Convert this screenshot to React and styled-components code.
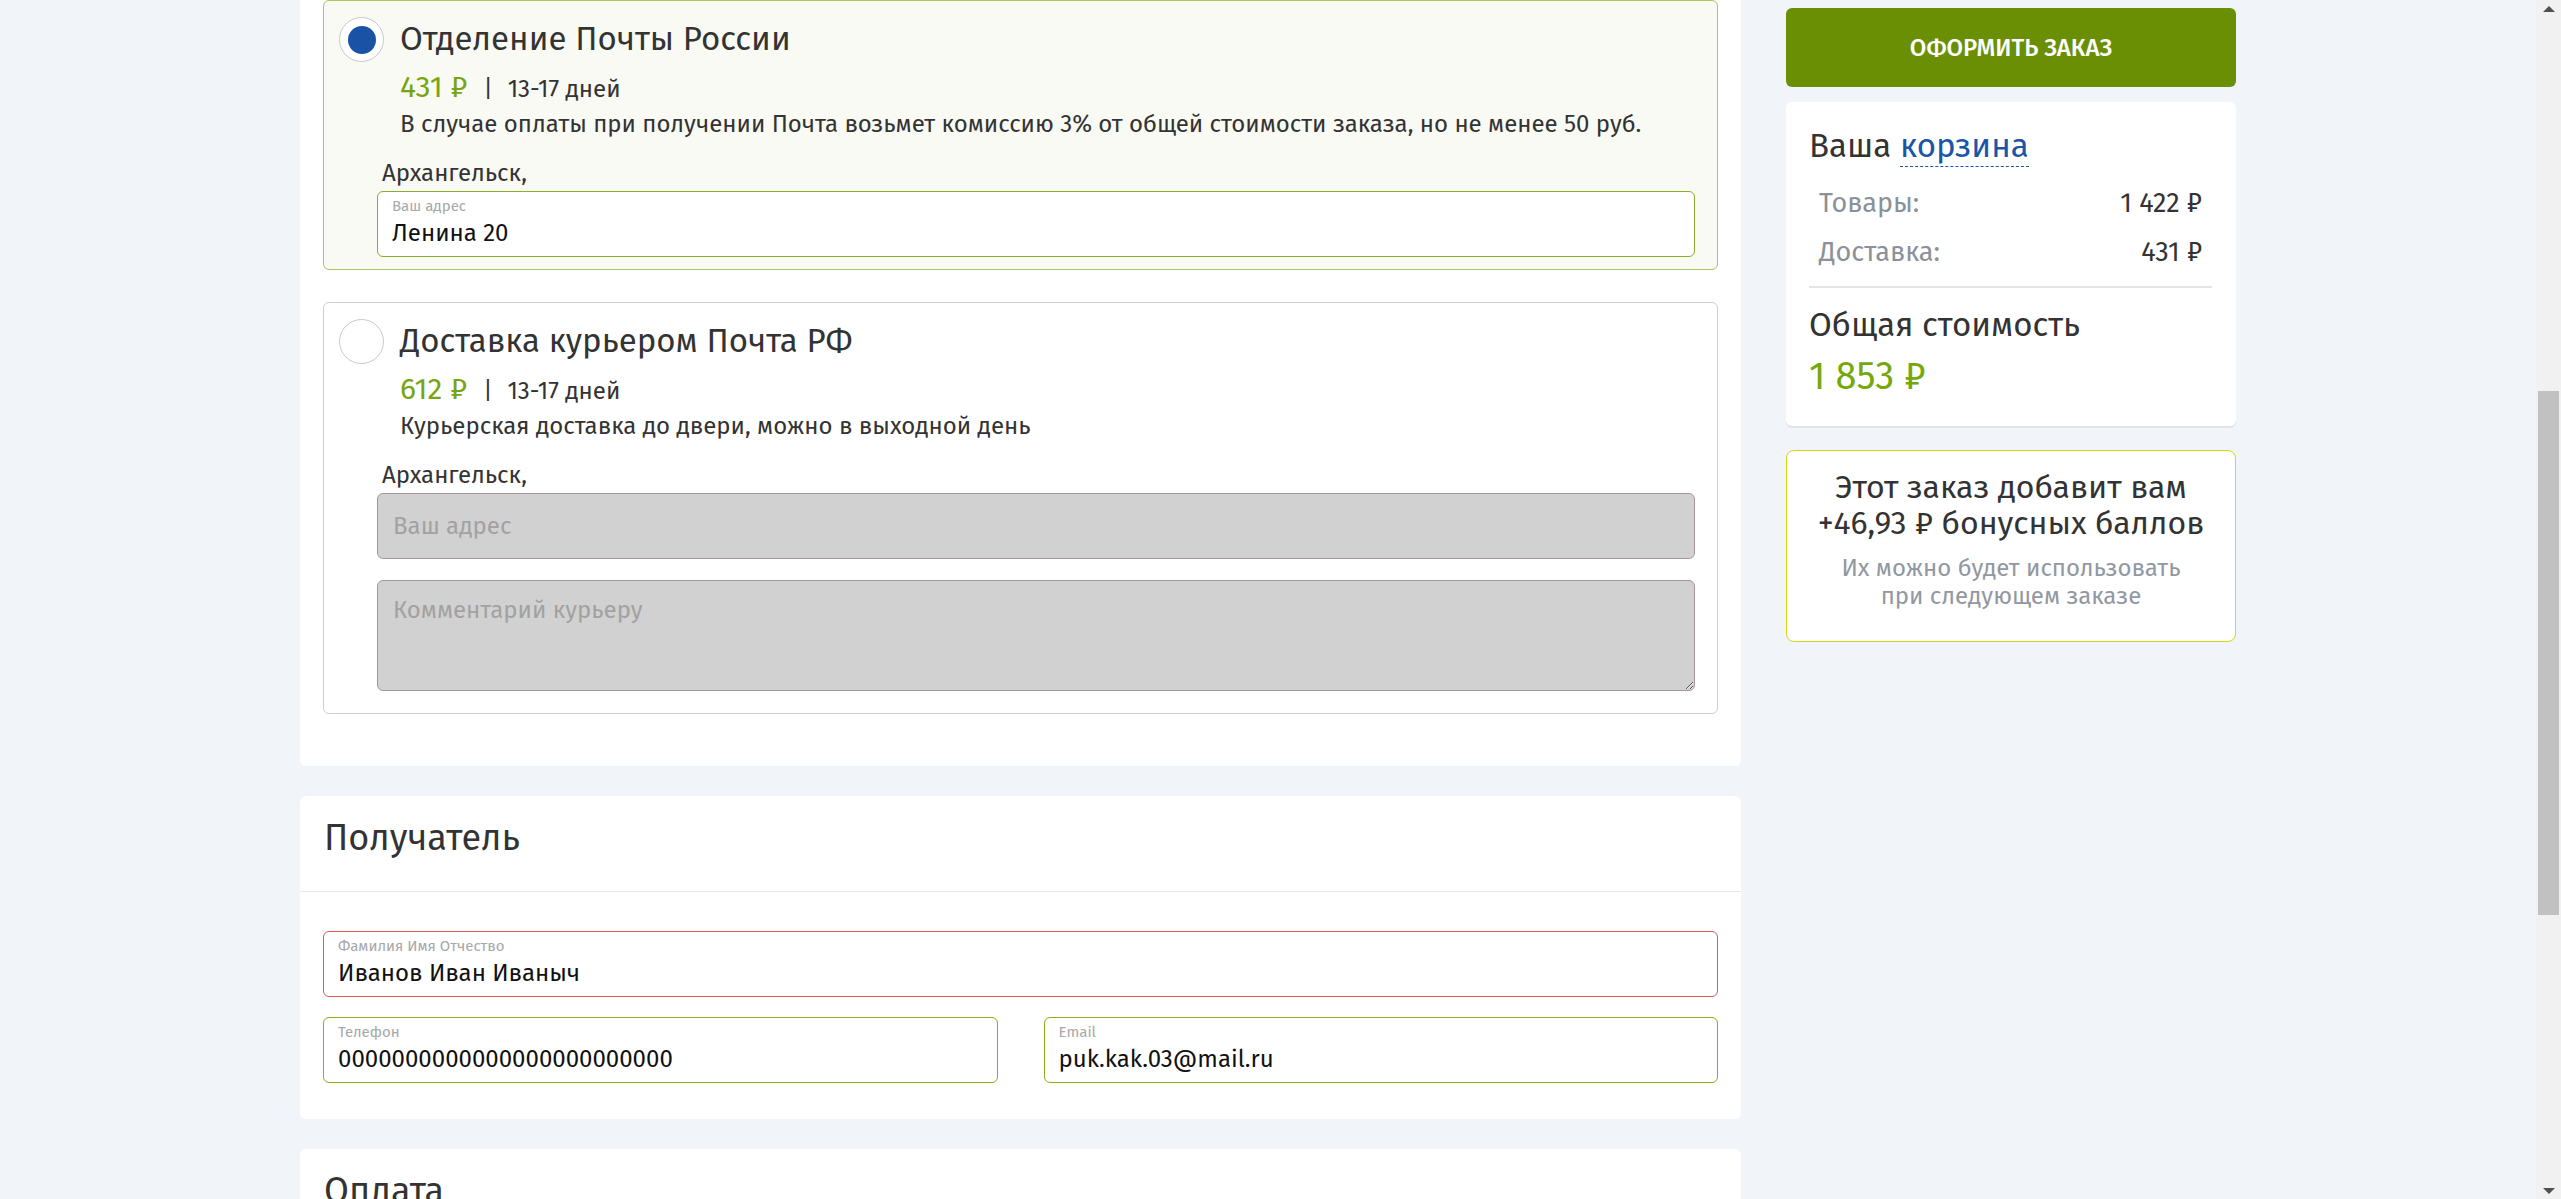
import React from "react";
import styled, { createGlobalStyle } from "styled-components";

const Global = createGlobalStyle`
  html, body { margin: 0; padding: 0; height: 1199px; overflow: hidden; background: #f1f4f8; }
  body { font-family: "Fira Sans", Roboto, "Noto Sans", sans-serif; color: #333; }
  * { box-sizing: border-box; }
  input, textarea, button { font-family: inherit; }
`;

const Screen = styled.div`
  display: flex;
  height: 1199px;
  overflow: hidden;
`;

const Viewport = styled.div`
  flex: 1;
  overflow: hidden;
`;

const Layout = styled.div`
  width: 1936px;
  margin: 0 auto;
  display: flex;
  gap: 45px;
  align-items: flex-start;
`;

const MainCol = styled.div`
  width: 1441px;
  display: flex;
  flex-direction: column;
  gap: 30px;
`;

const Panel = styled.section`
  background: #fff;
  border-radius: ${(p) => (p.$cut ? "0 0 6px 6px" : "6px")};
`;

const DeliveryList = styled.div`
  display: flex;
  flex-direction: column;
  gap: 32px;
  padding: 0 23px 52px 23px;
`;

const Card = styled.div`
  border: 1px solid ${(p) => (p.$active ? "#a9c75e" : "#cfcfcf")};
  background: ${(p) => (p.$active ? "#f9faf4" : "#fff")};
  border-radius: 6px;
  padding: 16px 22px ${(p) => p.$pb}px 15px;
`;

const CardHead = styled.div`
  display: flex;
  align-items: center;
  gap: 16px;
  height: 45px;
`;

const Radio = styled.span`
  width: 45px;
  height: 45px;
  flex: none;
  border-radius: 50%;
  border: 1px solid #c9c9c9;
  background: #fff;
  display: flex;
  align-items: center;
  justify-content: center;
  &::after {
    content: "";
    width: 28px;
    height: 28px;
    border-radius: 50%;
    background: ${(p) => (p.$on ? "#1a52a5" : "transparent")};
  }
`;

const CardTitle = styled.div`
  font-size: 33px;
  line-height: 45px;
  color: #333;
`;

const CardBody = styled.div`
  padding-left: 61px;
`;

const PriceRow = styled.div`
  margin-top: 7px;
  height: 36px;
  display: flex;
  align-items: baseline;
  line-height: 36px;
`;

const Price = styled.span`
  font-size: 30px;
  color: #78a50f;
`;

const Sep = styled.span`
  font-size: 23px;
  margin: 0 15px 0 16px;
  color: #333;
`;

const Days = styled.span`
  font-size: 24px;
  color: #333;
`;

const Desc = styled.div`
  margin-top: 3px;
  font-size: 24px;
  line-height: 32px;
  color: #333;
  white-space: nowrap;
`;

const Address = styled.div`
  margin-left: 38px;
  margin-top: 17px;
  display: flex;
  flex-direction: column;
`;

const City = styled.div`
  font-size: 24px;
  line-height: 32px;
  padding-left: 5px;
  margin-bottom: 2px;
  color: #333;
`;

const Field = styled.label`
  display: flex;
  flex-direction: column;
  height: 66px;
  border: 1px solid ${(p) => p.$border};
  border-radius: 6px;
  background: #fff;
  padding: 5px 15px 0 14px;
`;

const FieldLabel = styled.span`
  font-size: 15px;
  line-height: 18px;
  color: #a8a8a8;
`;

const FieldValue = styled.input`
  border: none;
  outline: none;
  padding: 0;
  background: transparent;
  font-size: 24px;
  line-height: 36px;
  height: 36px;
  color: #111;
  width: 100%;
`;

const GrayInput = styled.input`
  height: 66px;
  border: 1px solid #a99797;
  border-radius: 6px;
  background: #d1d1d1;
  padding: 0 15px;
  font-size: 24px;
  color: #333;
  outline: none;
  &::placeholder { color: #a2a2a2; }
`;

const GrayArea = styled.textarea`
  margin-top: 21px;
  height: 111px;
  border: 1px solid #a99797;
  border-radius: 6px;
  background: #d1d1d1;
  padding: 14px 15px;
  font-size: 24px;
  line-height: 30px;
  color: #333;
  outline: none;
  resize: both;
  &::placeholder { color: #a2a2a2; }
`;

const PanelHead = styled.div`
  padding: 21px 24px 31px;
  border-bottom: 1px solid #e4e7eb;
`;

const PanelTitle = styled.h2`
  margin: 0;
  font-size: 36px;
  line-height: 43px;
  font-weight: 400;
  color: #333;
`;

const RecipientBody = styled.div`
  padding: 39px 23px 36px;
  display: flex;
  flex-direction: column;
  gap: 20px;
`;

const TwoCols = styled.div`
  display: grid;
  grid-template-columns: 1fr 1fr;
  gap: 46px;
`;

const SideCol = styled.aside`
  width: 450px;
  margin-top: 8px;
  display: flex;
  flex-direction: column;
`;

const OrderButton = styled.button`
  height: 79px;
  border: none;
  border-radius: 6px;
  background: #6a8f05;
  color: #fff;
  font-size: 24px;
  font-weight: 500;
  text-transform: uppercase;
`;

const CartBox = styled.div`
  margin-top: 15px;
  background: #fff;
  border-radius: 6px;
  box-shadow: 0 2px 0 #e0e4e8;
  padding: 25px 24px 28px 23px;
`;

const CartTitle = styled.div`
  font-size: 33px;
  line-height: 38px;
  color: #333;
`;

const CartLink = styled.span`
  color: #1a56a8;
  border-bottom: 1px dashed #1a56a8;
`;

const Rows = styled.div`
  margin-top: 13px;
  display: flex;
  flex-direction: column;
`;

const Row = styled.div`
  height: 49px;
  display: flex;
  align-items: center;
  justify-content: space-between;
  padding: 0 10px 0 10px;
  font-size: 27px;
`;

const RowLabel = styled.span`
  color: #8b9199;
`;

const RowValue = styled.span`
  color: #333;
`;

const Divider = styled.div`
  margin-top: 10px;
  height: 2px;
  background: #e3e5e8;
`;

const TotalLabel = styled.div`
  margin-top: 18px;
  font-size: 33px;
  line-height: 38px;
  color: #333;
`;

const TotalPrice = styled.div`
  margin-top: 10px;
  font-size: 38px;
  line-height: 44px;
  color: #76a80c;
`;

const BonusBox = styled.div`
  margin-top: 24px;
  background: #fff;
  border: 1px solid #d3d80f;
  border-radius: 8px;
  padding: 18px 12px 31px;
  text-align: center;
`;

const BonusTitle = styled.div`
  font-size: 32px;
  line-height: 36px;
  color: #333;
`;

const BonusNote = styled.div`
  margin-top: 13px;
  font-size: 24px;
  line-height: 28px;
  color: #9298a1;
`;

const Scrollbar = styled.div`
  width: 25px;
  flex: none;
  height: 1199px;
  background: #f1f1f1;
  display: flex;
  flex-direction: column;
`;

const ScrollArrow = styled.div`
  height: 17px;
  display: flex;
  align-items: center;
  justify-content: center;
`;

const Track = styled.div`
  flex: 1;
  display: flex;
  flex-direction: column;
`;

const Thumb = styled.div`
  margin: 374px 2px 0;
  height: 524px;
  background: #c1c1c1;
`;

const Arrow = ({ down }) => (
  <svg width="12" height="6" viewBox="0 0 12 6">
    <path d={down ? "M0 0 L12 0 L6 6 Z" : "M0 6 L12 6 L6 0 Z"} fill="#505050" />
  </svg>
);

function DeliveryCard({ active, title, price, desc, children, pb }) {
  return (
    <Card $active={active} $pb={pb}>
      <CardHead>
        <Radio $on={active} />
        <CardTitle>{title}</CardTitle>
      </CardHead>
      <CardBody>
        <PriceRow>
          <Price>{price}</Price>
          <Sep>|</Sep>
          <Days>13-17 дней</Days>
        </PriceRow>
        <Desc>{desc}</Desc>
      </CardBody>
      <Address>
        <City>Архангельск,</City>
        {children}
      </Address>
    </Card>
  );
}

function TextField({ label, value, border }) {
  return (
    <Field $border={border}>
      <FieldLabel>{label}</FieldLabel>
      <FieldValue readOnly value={value} />
    </Field>
  );
}

export default function App() {
  return (
    <>
      <Global />
      <Screen>
        <Viewport>
          <Layout>
            <MainCol>
              <Panel $cut>
                <DeliveryList>
                  <DeliveryCard
                    active
                    pb={12}
                    title="Отделение Почты России"
                    price="431 ₽"
                    desc="В случае оплаты при получении Почта возьмет комиссию 3% от общей стоимости заказа, но не менее 50 руб."
                  >
                    <TextField label="Ваш адрес" value="Ленина 20" border="#8aad2b" />
                  </DeliveryCard>
                  <DeliveryCard
                    pb={22}
                    title="Доставка курьером Почта РФ"
                    price="612 ₽"
                    desc="Курьерская доставка до двери, можно в выходной день"
                  >
                    <GrayInput readOnly placeholder="Ваш адрес" />
                    <GrayArea readOnly placeholder="Комментарий курьеру" />
                  </DeliveryCard>
                </DeliveryList>
              </Panel>

              <Panel>
                <PanelHead>
                  <PanelTitle>Получатель</PanelTitle>
                </PanelHead>
                <RecipientBody>
                  <TextField label="Фамилия Имя Отчество" value="Иванов Иван Иваныч" border="#dc5c5c" />
                  <TwoCols>
                    <TextField label="Телефон" value="0000000000000000000000000" border="#86b11a" />
                    <TextField label="Email" value="puk.kak.03@mail.ru" border="#86b11a" />
                  </TwoCols>
                </RecipientBody>
              </Panel>

              <Panel>
                <PanelHead>
                  <PanelTitle>Оплата</PanelTitle>
                </PanelHead>
                <RecipientBody />
              </Panel>
            </MainCol>

            <SideCol>
              <OrderButton>Оформить заказ</OrderButton>
              <CartBox>
                <CartTitle>
                  Ваша <CartLink>корзина</CartLink>
                </CartTitle>
                <Rows>
                  <Row>
                    <RowLabel>Товары:</RowLabel>
                    <RowValue>1 422 ₽</RowValue>
                  </Row>
                  <Row>
                    <RowLabel>Доставка:</RowLabel>
                    <RowValue>431 ₽</RowValue>
                  </Row>
                </Rows>
                <Divider />
                <TotalLabel>Общая стоимость</TotalLabel>
                <TotalPrice>1 853 ₽</TotalPrice>
              </CartBox>
              <BonusBox>
                <BonusTitle>
                  Этот заказ добавит вам
                  <br />
                  +46,93 ₽ бонусных баллов
                </BonusTitle>
                <BonusNote>
                  Их можно будет использовать
                  <br />
                  при следующем заказе
                </BonusNote>
              </BonusBox>
            </SideCol>
          </Layout>
        </Viewport>
        <Scrollbar>
          <ScrollArrow>
            <Arrow />
          </ScrollArrow>
          <Track>
            <Thumb />
          </Track>
          <ScrollArrow>
            <Arrow down />
          </ScrollArrow>
        </Scrollbar>
      </Screen>
    </>
  );
}
